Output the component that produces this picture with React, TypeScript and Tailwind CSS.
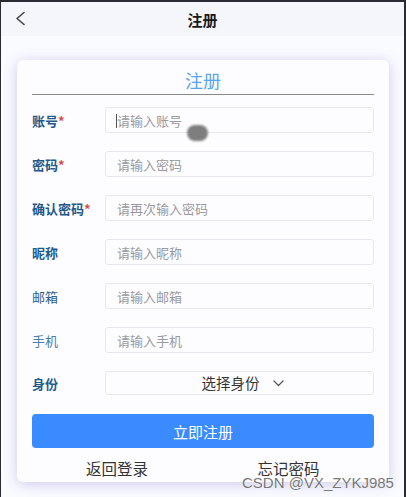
import React from "react";

const font = { fontFamily: '"Noto Sans CJK SC", "Noto Sans", sans-serif' };

type Row = { label: string; ph: string; req?: boolean; bold?: boolean; light?: boolean };

const rows: Row[] = [
  { label: "账号", ph: "请输入账号", req: true, bold: true },
  { label: "密码", ph: "请输入密码", req: true, bold: true },
  { label: "确认密码", ph: "请再次输入密码", req: true, bold: true },
  { label: "昵称", ph: "请输入昵称", bold: true },
  { label: "邮箱", ph: "请输入邮箱" },
  { label: "手机", ph: "请输入手机", light: true },
];

export default function App() {
  return (
    <div
      style={font}
      className="relative w-[406px] h-[497px] overflow-hidden bg-[#fafbff] border-t-2 border-l border-r-2 border-[#2a2a33] flex flex-col"
    >
      <div className="h-[34px] bg-[#f5f5fc] relative flex items-center justify-center shrink-0">
        <svg className="absolute left-[13px] top-[9px]" width="12" height="15" viewBox="0 0 12 15" fill="none">
          <path d="M10 1.5 L3 7.5 L10 13.5" stroke="#444" strokeWidth="1.6" strokeLinecap="round" strokeLinejoin="round" />
        </svg>
        <span className="text-[15px] font-bold text-[#1a1a1a] leading-none">注册</span>
      </div>

      <div className="mt-[24px] ml-[16px] w-[372px] h-[422px] bg-[#fdfdff] rounded-[6px] shadow-[0_2px_14px_rgba(110,100,200,0.32)] px-[15px] pt-[5px] flex flex-col">
        <div className="h-[29px] flex items-center justify-center text-[18px] text-[#5aa5ee] leading-none">注册</div>
        <div className="border-b border-[#8a8a8a]" />
        <div className="mt-[12px] flex flex-col gap-[18px]">
          {rows.map((r, i) => (
            <div key={r.label} className="flex items-center h-[26px]">
              <div
                className={`w-[73px] text-[13px] leading-none ${
                  r.bold ? "font-bold text-[#24598a]" : r.light ? "text-[#4a7fb0]" : "text-[#2d5f8e]"
                }`}
              >
                {r.label}
                {r.req && <span className="text-[#e0474c]">*</span>}
              </div>
              <div className="relative flex-1 h-[26px] border border-[#e6e7ef] rounded-[3px] bg-[#fdfdff] flex items-center pl-[11px]">
                {i === 0 && <div className="absolute left-[10px] top-[6px] w-px h-[14px] bg-[#555]" />}
                <span className="text-[13px] text-[#9a9aa0] leading-none">{r.ph}</span>
                {i === 0 && (
                  <div className="absolute left-[81px] top-[17px] w-[21px] h-[16px] rounded-full bg-[#7e7e7e] blur-[1px]" />
                )}
              </div>
            </div>
          ))}
          <div className="flex items-center h-[24px]">
            <div className="w-[73px] text-[13px] font-bold text-[#24598a] leading-none">身份</div>
            <div className="flex-1 h-[24px] border border-[#e6e7ef] rounded-[3px] bg-[#fdfdff] flex items-center justify-center pl-[6px]">
              <span className="text-[14.5px] text-[#333] leading-none">选择身份</span>
              <svg className="ml-[13px]" width="11" height="7" viewBox="0 0 11 7" fill="none">
                <path d="M1 1 L5.5 5.5 L10 1" stroke="#555" strokeWidth="1.2" strokeLinecap="round" strokeLinejoin="round" />
              </svg>
            </div>
          </div>
        </div>
        <div className="mt-[19px] h-[34px] bg-[#3a8bff] rounded-[4px] flex items-center justify-center text-white text-[15px] leading-none">
          立即注册
        </div>
        <div className="mt-[13px] grid grid-cols-2 text-center text-[15.5px] text-[#333] leading-none">
          <span className="ml-[-1px]">返回登录</span>
          <span>忘记密码</span>
        </div>
      </div>

      <div
        className="absolute left-[241px] top-[473px] text-[15px] text-[#777] leading-none"
        style={{ fontFamily: '"Liberation Sans", Arial, sans-serif', textShadow: "0 0 1px #fff, 0 0 1px #fff" }}
      >
        CSDN @VX_ZYKJ985
      </div>
    </div>
  );
}
